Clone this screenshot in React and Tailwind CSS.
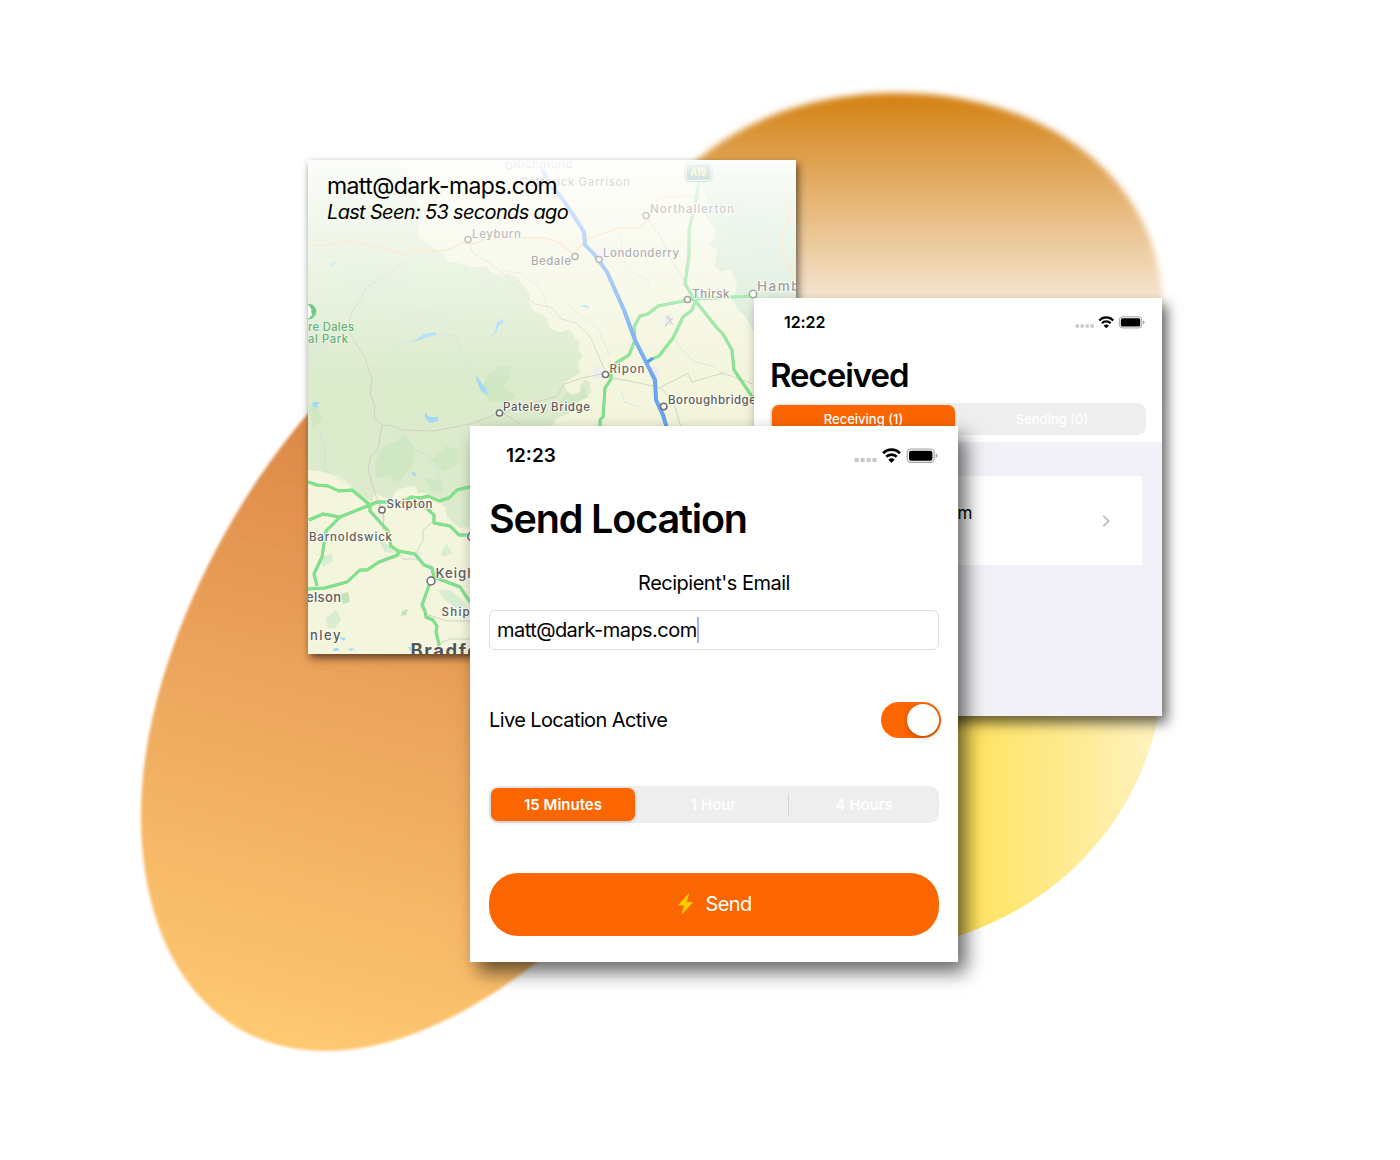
import React from "react";

const FONT = "font-['Inter','Liberation_Sans',sans-serif]";

function Backdrop() {
  return (
    <svg className="absolute inset-0" width="1400" height="1160" viewBox="0 0 1400 1160">
      <defs>
        <linearGradient id="amber" gradientUnits="userSpaceOnUse" x1="430" y1="400" x2="262" y2="1050">
          <stop offset="0" stopColor="#da8343" />
          <stop offset="0.45" stopColor="#eba35b" />
          <stop offset="1" stopColor="#ffc971" />
        </linearGradient>
        <linearGradient id="ochre" gradientUnits="userSpaceOnUse" x1="0" y1="98" x2="0" y2="306">
          <stop offset="0" stopColor="#d48316" />
          <stop offset="1" stopColor="#f7e9d7" />
        </linearGradient>
        <linearGradient id="lemon" gradientUnits="userSpaceOnUse" x1="970" y1="0" x2="1162" y2="0">
          <stop offset="0" stopColor="#ffe35f" />
          <stop offset="1" stopColor="#fff3c2" />
        </linearGradient>
        <filter id="soft3" x="-10%" y="-10%" width="120%" height="120%"><feGaussianBlur stdDeviation="3" /></filter>
        <filter id="soft2" x="-10%" y="-10%" width="120%" height="120%"><feGaussianBlur stdDeviation="1.8" /></filter>
      </defs>
      <path fill="url(#lemon)" d="M900 700 H1160 L1158 717 C1140 810 1070 900 958 936 L900 950 Z" />
      <path fill="url(#ochre)" filter="url(#soft3)" d="M640 220 L690 166 C747 115 820 93 897 93 C1045 93 1163 178 1163 312 V400 H640 Z" />
      <path fill="url(#amber)" filter="url(#soft2)" d="M330 390 C240 480 141 660 141 815 C141 960 215 1051 325 1051 C400 1051 476 1010 537 962 Q570 935 620 890 V390 Z" />
    </svg>
  );
}

const MAJOR = [
  "M699 182 L695 205 689 230 689 255 685 284 694 299 717 328 723 334 732 350 734 370 753 398",
  "M694 299 L753 296 M694 299 L658 306 648 314 640 316 634 327 635 340 629 355 616 363 611 372 611 379 605 388 603 417 600 420 600 430",
  "M695 302 L692 310 683 317 673 338 659 356 648 361",
  "M753 296 L764 302",
  "M308 482 L317 485 328 486 339 491 352 490 363 499 370 505 377 502 402 502 411 497 421 498 428 496 439 501 449 498 457 490 473 486",
  "M370 505 L340 517 323 514 309 520 M340 517 L326 531 322 557 314 574 317 586 M308 589 L325 588 347 582 360 570 367 570 379 562 398 555 398 551 391 546 388 531 370 511 370 505",
  "M398 551 L415 554 424 565 432 568 434 577 460 587 470 602",
  "M402 502 L424 506 434 515 434 523 450 526 459 535 472 535",
  "M432 577 L422 605 425 611 426 617 433 620 437 626 436 632 439 644 438 652",
];

const LABELS = [
  { t: "Richmond", x: 513, y: 168, w: 60, s: 12 },
  { t: "Catterick Garrison", x: 520, y: 186, w: 110, s: 11.5 },
  { t: "Northallerton", x: 650, y: 213, w: 84, s: 11.5 },
  { t: "Leyburn", x: 472, y: 238, w: 49, s: 11.5 },
  { t: "Bedale", x: 531, y: 265, w: 40, s: 11.5 },
  { t: "Londonderry", x: 603, y: 257, w: 76, s: 11.5 },
  { t: "Thirsk", x: 692, y: 297.5, w: 37.5, s: 11.5 },
  { t: "Hambleton", x: 757, y: 291, w: 82, s: 13.5 },
  { t: "Ripon", x: 609.5, y: 372.5, w: 35, s: 11.5 },
  { t: "Pateley Bridge", x: 503, y: 410.5, w: 87, s: 11.5 },
  { t: "Boroughbridge", x: 668, y: 404, w: 88, s: 11.5 },
  { t: "Skipton", x: 386.5, y: 508, w: 46, s: 11.5 },
  { t: "Barnoldswick", x: 309, y: 541, w: 83, s: 11.5 },
  { t: "Keighley", x: 435.5, y: 578, w: 61, s: 13.2 },
  { t: "elson", x: 306, y: 602, w: 35, s: 13 },
  { t: "nley", x: 310, y: 639.5, w: 30.5, s: 13 },
  { t: "Shipley", x: 441.5, y: 615.5, w: 48, s: 11.5 },
  { t: "Bradford", x: 410.5, y: 656.5, w: 90, s: 18.5, b: 1 },
  { t: "Otley", x: 466.5, y: 541, w: 32, s: 11.5 },
];

const PLACES = [
  [509, 166, 3], [646, 215.5, 3], [468, 239.5, 3], [575, 256.5, 3], [599, 259.5, 3], [687.5, 299.5, 3.1],
  [753, 294, 3.7], [605.5, 374.5, 3.1], [499.5, 413, 3.1], [663.7, 406.5, 3.2], [382, 510, 3.1], [431, 581, 3.9],
];

function MapDrawing() {
  return (
    <svg className="absolute inset-0" width="488" height="494" viewBox="308 160 488 494">
      <defs>
        <linearGradient id="haze" x1="0" y1="0" x2="0" y2="1">
          <stop offset="0" stopColor="#fff" stopOpacity="0.96" />
          <stop offset="0.03" stopColor="#fff" stopOpacity="0.82" />
          <stop offset="0.12" stopColor="#fff" stopOpacity="0.64" />
          <stop offset="0.28" stopColor="#fff" stopOpacity="0.36" />
          <stop offset="0.45" stopColor="#fff" stopOpacity="0" />
        </linearGradient>
      </defs>
      <rect x="308" y="160" width="488" height="494" fill="#f3f5dc" />
      <path fill="#dbebcc" d="M308 160 H405 L412 190 422 212 420 222 418 237 427 243 437 250 445 253 447 262 455 262 473 267 487 267 492 273 503 276 507 273 515 275 525 287 530 293 529 301 533 310 543 316 547 318 550 328 557 332 563 332 570 329 575 339 580 342 578 350 583 355 578 363 580 373 572 378 563 383 567 391 573 394 580 392 580 385 586 379 590 383 591 392 584 399 577 403 570 413 557 418 550 430 520 560 470 527 460 528 447 517 445 507 437 500 427 493 418 493 415 486 407 487 397 490 391 499 383 497 375 493 372 502 365 498 347 482 338 476 327 473 320 471 308 470 Z" />
      <path fill="#d3e9d0" d="M700 160 L703 190 707 199 705 215 716 230 714 240 708 243 717 250 715 267 722 272 730 269 735 279 737 287 733 300 738 310 745 316 753 330 H796 V160 Z" />
      <g fill="#c9e5c0" opacity="0.6">
        <path d="M375 462 L382 448 398 440 405 434 415 448 414 463 405 475 398 482 388 476 376 478 Z" />
        <path d="M432 460 L446 446 459 451 455 466 443 472 Z" />
        <path d="M487 375 L500 365 511 367 510 378 502 386 515 395 507 403 490 401 480 390 Z" />
        <path d="M566 393 L575 397 584 386 588 397 576 402 571 411 556 408 Z" />
        <path d="M308 407 L316 404 323 420 313 427 Z M425 478 L443 481 441 493 430 490 Z" />
      </g>
      <g fill="#cfe4d5" opacity="0.25">
        <path d="M350 253 L377 244 385 260 405 262 410 285 385 292 363 303 349 291 Z M398 315 L440 303 453 321 438 329 420 322 405 334 Z M486 282 L497 276 498 289 479 290 Z M308 310 L325 322 331 342 308 365 Z" />
        <path d="M734 205 L775 221 785 240 770 260 742 248 725 228 Z" />
      </g>
      <g fill="#d7ecd0">
        <path d="M326 618 L336 610 341 619 335 629 328 628 Z M442 550 L447 544 452 553 445 557 441 555 Z M438 590 L452 591 466 605 456 608 445 600 Z M378 540 L389 545 395 553 385 552 Z M320 557 L332 554 333 561 323 567 Z" />
        <path fill="#c4e3b4" d="M341 594 L348 592 350 602 343 604 Z M402 611 L408 609 406 615 401 616 Z" />
      </g>
      <g fill="#eeeaf0">
        <path d="M652 366 L660 367 655 385 650 377 Z M592 369 L600 366 604 378 594 379 Z M597 244 L610 252 606 264 595 258 Z M409 551 L423 552 420 559 408 556 Z M428 561 L440 576 435 587 430 580 Z M664 315 L672 324 665 327 Z" />
      </g>
      <g fill="none" stroke="#c9ccc0" strokeWidth="0.8">
        <path d="M402 263 L390 272 365 289 363 296 352 312 347 329 357 345 365 358 372 379 370 393 375 407 374 416 382 426 378 449 370 457 368 470 376 496 383 512 384 530" />
        <path d="M382 426 L389 425 402 430 434 431 470 424 499 413 M470 240 L472 252 490 263 510 280 534 304 551 307 562 319 576 323 590 336 606 373 582 378 564 384 556 397 530 403 503 413 520 424" />
        <path d="M612 378 L635 382 661 388 673 401 681 427 M661 387 L681 377 688 373 692 382 723 373 753 384 M646 217 L660 236 671 259 684 280 693 297" />
        <path d="M399 553 L403 559 418 559 M416 553 L423 540 423 530 433 522 M426 614 L447 621 472 621 M440 643 L450 639 472 639 M378 502 L384 517 383 530" />
      </g>
      <g fill="none" stroke="#bfe1e8" strokeWidth="0.9" opacity="0.7">
        <path d="M391 347 L415 340 427 334 M437 334 L457 336 460 355 474 373 488 396 M500 270 L520 273 528 280 536 284 545 298 548 312 562 320 M565 303 L583 317 599 330 610 356 M320 433 L325 450 325 470 345 483 361 494 M385 427 L400 436 416 450 430 457 437 470 442 490 M620 235 L624 262 634 273 648 280 650 291 M675 340 L682 350 695 362 714 366 724 375 M622 392 L624 402 640 407" />
      </g>
      <g fill="#a0daf5">
        <path d="M412 343 L424 334 436 332 436 335 427 337 414 342 Z M475 376 L479 379 487 391 488 395 481 391 Z M425 412 L429 417 438 417 438 421 430 423 425 418 Z M488 338 L495 332 497 322 503 319 503 323 499 325 496 333 489 337 Z M411 472 L417 473 414 477 Z M313 402 L319 402 317 408 312 406 Z M580 306 L585 305 589 306 588 308 583 307 Z M339 637 L346 638 344 641 Z M334 648 L339 648 338 651 333 651 Z M349 648 L355 649 350 651 Z M408 647 L412 647 411 652 Z M427 506 L433 510 429 511 Z M331 264 L336 260 335 264 332 266 Z" />
      </g>
      <g fill="none" stroke="#fbd3a0" strokeWidth="1.5">
        <path d="M308 245 H330 L347 241 373 245 402 254 418 248 433 251 447 250 462 243 472 244 485 240 500 238 545 238 560 243 573 254 587 239 619 228 640 228 650 216 660 197 700 196" />
        <path d="M782 182 L789 202 788 222 782 236 782 250 796 280" />
      </g>
      <g fill="none" strokeLinejoin="round">
        {MAJOR.map((d) => <path key={d} d={d} stroke="#78c983" strokeWidth="3" />)}
        {MAJOR.map((d) => <path key={d} d={d} stroke="#7ee58b" strokeWidth="2.3" />)}
        <g stroke="#4f8fdf" strokeWidth="3.8">
          <path d="M541 166 L547 180 561 197 572 213 584 232 585 245 594 254 607 272 624 310 635 340 648 366 655 380 656 400 663 415 668 432" />
          <path d="M646 363 L653 358" strokeWidth="3.2" />
        </g>
        <path stroke="#6ba6f7" strokeWidth="2.8" d="M541 166 L547 180 561 197 572 213 584 232 585 245 594 254 607 272 624 310 635 340 648 366 655 380 656 400 663 415 668 432" />
      </g>
      <path stroke="#bfc3c7" strokeWidth="1.2" fill="none" d="M666 316 L673 325 M673 318 L665 326 M668 315 L671 320" />
      {PLACES.map(([x, y, r]) => (
        <circle key={x} cx={x} cy={y} r={r} fill="#fff" stroke="#6f6f6d" strokeWidth="1.5" />
      ))}
      <g className={FONT}>
        {LABELS.map((l) => (
          <text key={l.t} x={l.x} y={l.y} fontSize={l.s} textLength={l.w} lengthAdjust="spacing"
            fontWeight={l.b ? 700 : 500} fill={l.b ? "#555553" : "#5c5c5a"} stroke="#fbfbf2" strokeWidth="2" strokeLinejoin="round" paintOrder="stroke">
            {l.t}
          </text>
        ))}
        <rect x="686" y="163.5" width="25" height="17" rx="3" fill="#23705b" stroke="#fff" strokeWidth="1" />
        <rect x="685" y="162.5" width="27" height="19" rx="4" fill="none" stroke="#23705b" strokeWidth="1" />
        <text x="690.5" y="176" fontSize="11.5" fontWeight="700" fill="#ffdf3c" textLength="15.5" lengthAdjust="spacingAndGlyphs">A19</text>
      </g>
      <rect x="308" y="160" width="488" height="494" fill="url(#haze)" />
      <circle cx="308.5" cy="311.5" r="7.8" fill="#74c985" />
      <path fill="#fff" d="M308 305 L309.5 306 311.5 310 311 312 312.5 315.5 310 316 310 318 308 318 Z" />
      <g className={FONT} fontWeight="500" fontSize="11.2" fill="#66b074" stroke="#edf6e8" strokeWidth="1.6" paintOrder="stroke">
        <text x="308" y="331" textLength="46" lengthAdjust="spacing">re Dales</text>
        <text x="308" y="343" textLength="40" lengthAdjust="spacing">al Park</text>
      </g>
    </svg>
  );
}

function MapCard() {
  return (
    <section className="absolute left-[308px] top-[160px] h-[494px] w-[488px] shadow-[2px_4px_8px_rgba(0,0,0,0.6)]">
      <MapDrawing />
      <div className="relative pl-[19px] pt-3 text-black">
        <p className="text-[23px] leading-[28px] tracking-[-0.6px]">matt@dark-maps.com</p>
        <p className="text-[20px] italic leading-[24px] tracking-[-0.67px]">Last Seen: 53 seconds ago</p>
      </div>
    </section>
  );
}

function StatusIcons({ className }) {
  return (
    <svg className={className} viewBox="0 0 84 16">
      <g fill="#c9c9cb">
        <rect x="0.6" y="10" width="4.2" height="4.2" rx="1" />
        <rect x="6.5" y="10" width="4.2" height="4.2" rx="1" />
        <rect x="12.5" y="10" width="4.2" height="4.2" rx="1" />
        <rect x="18.4" y="10" width="4.2" height="4.2" rx="1" />
      </g>
      <g fill="none" stroke="#000" strokeWidth="2.7">
        <path d="M29.1 5.3 A11.6 11.6 0 0 1 45.9 5.3" />
        <path d="M32.3 8.8 A7.2 7.2 0 0 1 42.7 8.8" />
      </g>
      <path fill="#000" d="M34.3 11.7 Q37.5 9 40.7 11.7 L37.5 14.8 Z" />
      <rect x="53.2" y="1" width="27" height="13.4" rx="3.8" fill="none" stroke="#a3a3a3" strokeWidth="1.2" />
      <rect x="55" y="2.7" width="23.4" height="10" rx="2" fill="#000" />
      <path fill="#a3a3a3" d="M81.7 5.4 Q83.6 6.2 83.6 7.7 Q83.6 9.2 81.7 10 Z" />
    </svg>
  );
}

function ReceivedCard() {
  return (
    <section className="absolute left-[754px] top-[298px] flex h-[418px] w-[408px] flex-col bg-[#f2f1f7] shadow-[5px_7px_12px_rgba(0,0,0,0.6)]">
      <div className="h-36 shrink-0 bg-white px-4">
        <header className="flex h-[49px] items-center justify-between pl-[14px] pr-px">
          <span className="-mt-px text-[16px] font-semibold tracking-[-0.1px]">12:22</span>
          <StatusIcons className="h-[13.3px] w-[70px]" />
        </header>
        <h2 className="flex h-14 items-center pt-[2px] text-[33px] font-semibold tracking-[-1.05px]">Received</h2>
        <div className="flex h-8 rounded-[9px] bg-[#eeeeef] p-[2px] text-[13px] font-medium text-white">
          <div className="flex w-[183px] items-center justify-center rounded-[7px] bg-[#fc6600] pt-px shadow-[0_1px_3px_rgba(0,0,0,0.2)]">Receiving (1)</div>
          <div className="flex flex-1 items-center justify-center pl-[5px] pt-px">Sending (0)</div>
        </div>
      </div>
      <div className="mx-5 mt-[34px] flex h-[89px] items-center justify-between bg-white pl-4 pr-8">
        <div className="flex w-[182px] justify-end pb-[13px] text-[17px] tracking-[-0.4px]">matt@dark-maps.com</div>
        <svg className="h-3 w-2" viewBox="0 0 8 12" fill="none" stroke="#c4c4c7" strokeWidth="2"><path d="M1.2 0.8 6.7 6 1.2 11.2" /></svg>
      </div>
    </section>
  );
}

function SendCard() {
  return (
    <section className="absolute left-[470px] top-[426px] flex h-[536px] w-[488px] flex-col bg-white px-[19px] shadow-[8px_10px_18px_rgba(0,0,0,0.6)]">
      <header className="flex h-[59px] items-center justify-between pl-[17px] pr-px">
        <span className="pt-[2px] text-[19px] font-semibold">12:23</span>
        <StatusIcons className="h-4 w-[84px]" />
      </header>
      <h1 className="flex h-[69px] items-center pt-px text-[39.5px] font-semibold tracking-[-1.15px]">Send Location</h1>
      <label className="flex h-14 items-center justify-center pt-[2px] text-[20px] tracking-[-0.5px]">Recipient's Email</label>
      <div className="flex h-10 items-center rounded-[6px] border border-[#dedede] pl-[7px] text-[20px] tracking-[-0.55px]">
        <span>matt@dark-maps.com</span>
        <span className="h-[26px] w-[2px] bg-[#9fb2fb]" />
      </div>
      <div className="-mr-0.5 mt-[51.5px] flex h-[37px] items-center justify-between text-[20px] tracking-[-0.61px]">
        <span className="pb-px">Live Location Active</span>
        <div className="flex h-[36.5px] w-[60.5px] items-center justify-end rounded-full bg-[#fc6600] pr-[2.5px]">
          <div className="size-8 rounded-full bg-white shadow-[0_2px_5px_rgba(0,0,0,0.25)]" />
        </div>
      </div>
      <div className="mt-[47px] flex h-[37.5px] shrink-0 items-center rounded-[9px] bg-[#eeeeef] px-[2px] text-[15px] font-medium text-white">
        <div className="flex h-[33px] w-[144px] items-center justify-center rounded-[7px] bg-[#fc6600] pt-px font-semibold shadow-[0_1px_4px_rgba(0,0,0,0.2)]">15 Minutes</div>
        <div className="flex flex-1 items-center justify-center pl-1 pt-px">1 Hour</div>
        <div className="h-[21px] w-px bg-[#d6d6d8]" />
        <div className="flex w-[148px] items-center justify-center pl-0.5 pt-px">4 Hours</div>
      </div>
      <button className="mt-[49.5px] flex h-[63px] shrink-0 items-center justify-center rounded-[29px] bg-[#fc6600] pl-[2px] text-[20px] tracking-[-0.6px] text-white">
        <svg className="mr-3 h-[22px] w-[15px]" viewBox="0 0 15 22"><path fill="#ffcc00" stroke="#ffcc00" strokeWidth="0.8" strokeLinejoin="round" d="M10.6 0.8 0.7 12 H6.5 L4.1 21 14.3 9.4 H8.3 Z" /></svg>
        Send
      </button>
    </section>
  );
}

export default function App() {
  return (
    <main className={`relative h-[1160px] w-[1400px] overflow-hidden bg-white text-black ${FONT}`}>
      <Backdrop />
      <MapCard />
      <ReceivedCard />
      <SendCard />
    </main>
  );
}
